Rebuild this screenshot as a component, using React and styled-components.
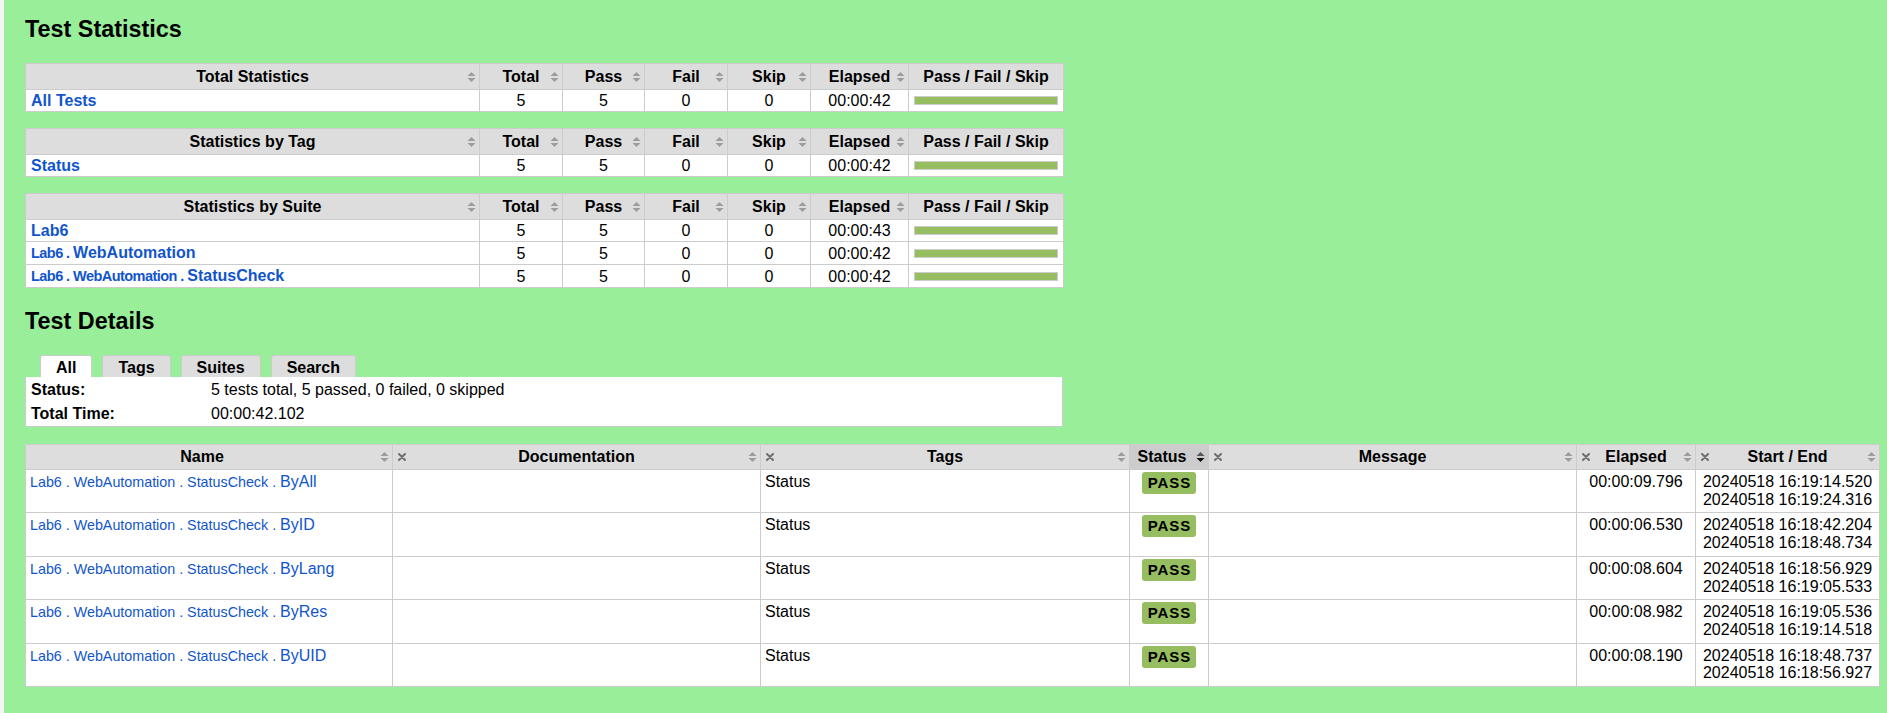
import React from 'react';
import styled, { createGlobalStyle } from 'styled-components';

const GlobalStyle = createGlobalStyle`
    html, body {
        margin: 0;
        padding: 0;
    }
    body {
        background: #9e9;
        color: #000;
        font-family: "Liberation Sans", Arial, Helvetica, sans-serif;
        font-size: 16px;
    }
`;

const Page = styled.div`
    min-height: 100vh;
    box-sizing: border-box;
    border-left: 4px solid #f4f4f4;
    padding: 0 8px 0 21px;
    overflow: hidden;
`;

const Heading = styled.h2`
    margin: ${({ $top }) => $top}px 0 20px;
    font-size: 23.4px;
    line-height: 27px;
    font-weight: bold;
`;

const Link = styled.a`
    color: #15c;
    text-decoration: none;
    font-weight: ${({ $bold }) => ($bold ? 'bold' : 'normal')};
    cursor: pointer;
`;

const ParentName = styled.span`
    font-size: ${({ $size }) => $size}px;
    letter-spacing: ${({ $spacing }) => $spacing || 0}px;
`;

/* ---------- sort / close marks ---------- */

const SortMark = styled.svg`
    position: absolute;
    right: 3px;
    top: 50%;
    margin-top: -6px;
    width: 9px;
    height: 12px;
`;

function SortIcon({ up = '#9c9c9c', down = '#9c9c9c' }) {
    return (
        <SortMark viewBox="0 0 9 12">
            <polygon points="0.5,5 4.5,1 8.5,5" fill={up} />
            <polygon points="0.5,7 4.5,11 8.5,7" fill={down} />
        </SortMark>
    );
}

const CloseMark = styled.svg`
    position: absolute;
    left: 5px;
    top: 50%;
    margin-top: -4px;
    width: 8px;
    height: 8px;
`;

function CloseIcon() {
    return (
        <CloseMark viewBox="0 0 8 8">
            <path d="M1 1 L7 7 M7 1 L1 7" stroke="#707070" strokeWidth="2" strokeLinecap="round" />
        </CloseMark>
    );
}

/* ---------- statistics tables ---------- */

const StatTable = styled.table`
    width: 1038px;
    table-layout: fixed;
    border-collapse: collapse;
    margin-bottom: 16px;
    background: #fff;
`;

const Col = styled.col`
    width: ${({ $w }) => $w}px;
`;

const StatHead = styled.th`
    position: relative;
    background: #ddd;
    border: 1px solid #ccc;
    padding: 3px 5px;
    line-height: 19px;
    font-weight: bold;
    text-align: center;
    white-space: nowrap;
`;

const StatCell = styled.td`
    border: 1px solid #ccc;
    padding: 1px 5px;
    line-height: 19px;
    text-align: ${({ $align }) => $align || 'center'};
    vertical-align: middle;
    white-space: nowrap;
`;

const Graph = styled.div`
    border: 1px solid #ccc;
    height: 7px;
    background: #f2f2f2;
`;

const PassBar = styled.div`
    height: 100%;
    background: #97bd61;
`;

const statCols = [454, 83, 82, 83, 83, 98, 155];

function StatsTable({ title, rows }) {
    return (
        <StatTable>
            <colgroup>
                {statCols.map((w, i) => <Col key={i} $w={w} />)}
            </colgroup>
            <thead>
                <tr>
                    <StatHead>{title}<SortIcon /></StatHead>
                    <StatHead>Total<SortIcon /></StatHead>
                    <StatHead>Pass<SortIcon /></StatHead>
                    <StatHead>Fail<SortIcon /></StatHead>
                    <StatHead>Skip<SortIcon /></StatHead>
                    <StatHead>Elapsed<SortIcon /></StatHead>
                    <StatHead>Pass / Fail / Skip</StatHead>
                </tr>
            </thead>
            <tbody>
                {rows.map((r) => (
                    <tr key={r.parent + r.name}>
                        <StatCell $align="left">
                            <Link $bold>
                                {r.parent && (
                                    <ParentName $size={14.5} $spacing={-0.55}>{r.parent}</ParentName>
                                )}
                                {r.name}
                            </Link>
                        </StatCell>
                        <StatCell>{r.total}</StatCell>
                        <StatCell>{r.pass}</StatCell>
                        <StatCell>{r.fail}</StatCell>
                        <StatCell>{r.skip}</StatCell>
                        <StatCell>{r.elapsed}</StatCell>
                        <StatCell $align="left">
                            <Graph>
                                <PassBar style={{ width: `${(r.pass / r.total) * 100}%` }} />
                            </Graph>
                        </StatCell>
                    </tr>
                ))}
            </tbody>
        </StatTable>
    );
}

const base = { total: 5, pass: 5, fail: 0, skip: 0 };

const totalRows = [{ ...base, parent: '', name: 'All Tests', elapsed: '00:00:42' }];
const tagRows = [{ ...base, parent: '', name: 'Status', elapsed: '00:00:42' }];
const suiteRows = [
    { ...base, parent: '', name: 'Lab6', elapsed: '00:00:43' },
    { ...base, parent: 'Lab6 . ', name: 'WebAutomation', elapsed: '00:00:42' },
    { ...base, parent: 'Lab6 . WebAutomation . ', name: 'StatusCheck', elapsed: '00:00:42' },
];

/* ---------- details ---------- */

const Tabs = styled.div`
    display: flex;
    align-items: flex-end;
    gap: 10px;
    padding-left: 15px;
`;

const Tab = styled.div`
    padding: 2px 15px 0;
    line-height: 19px;
    border: 1px solid #ccc;
    border-bottom: none;
    border-radius: 3px 3px 0 0;
    background: ${({ $active }) => ($active ? '#fff' : '#ddd')};
    font-weight: bold;
    cursor: pointer;
`;

const Summary = styled.div`
    width: 1038px;
    box-sizing: border-box;
    display: grid;
    grid-template-columns: 180px 1fr;
    row-gap: 5px;
    padding: 3px 5px;
    background: #fff;
    border: 1px solid #ccc;
    border-top: none;
    line-height: 19px;
    margin-bottom: 17px;
`;

const SummaryLabel = styled.div`
    font-weight: bold;
`;

const DetailTable = styled.table`
    width: 100%;
    table-layout: fixed;
    border-collapse: collapse;
    background: #fff;
`;

const DetailHead = styled.th`
    position: relative;
    background: ${({ $sorted }) => ($sorted ? '#ccc' : '#ddd')};
    border: 1px solid #ccc;
    padding: 3px 18px 3px ${({ $closable }) => ($closable ? 18 : 4)}px;
    line-height: 18px;
    font-weight: bold;
    text-align: center;
    white-space: nowrap;
`;

const DetailCell = styled.td`
    border: 1px solid #ccc;
    padding: 3px 4px 4px;
    line-height: 17.7px;
    vertical-align: top;
    text-align: ${({ $align }) => $align || 'left'};
    white-space: nowrap;
`;

const Label = styled.span`
    display: inline-block;
    vertical-align: top;
    margin-top: -1px;
    padding: 2px 5px 2px 6px;
    line-height: 18px;
    font-size: 15px;
    font-weight: bold;
    letter-spacing: 1px;
    color: #000;
    background: #97bd61;
    border-radius: 3px;
`;

const detailCols = [367, 368, 369, 79, 368, 119, 184];

const tests = [
    { name: 'ByAll', elapsed: '00:00:09.796', start: '20240518 16:19:14.520', end: '20240518 16:19:24.316' },
    { name: 'ByID', elapsed: '00:00:06.530', start: '20240518 16:18:42.204', end: '20240518 16:18:48.734' },
    { name: 'ByLang', elapsed: '00:00:08.604', start: '20240518 16:18:56.929', end: '20240518 16:19:05.533' },
    { name: 'ByRes', elapsed: '00:00:08.982', start: '20240518 16:19:05.536', end: '20240518 16:19:14.518' },
    { name: 'ByUID', elapsed: '00:00:08.190', start: '20240518 16:18:48.737', end: '20240518 16:18:56.927' },
];

function TestDetails() {
    return (
        <>
            <Tabs>
                <Tab $active>All</Tab>
                <Tab>Tags</Tab>
                <Tab>Suites</Tab>
                <Tab>Search</Tab>
            </Tabs>
            <Summary>
                <SummaryLabel>Status:</SummaryLabel>
                <div>5 tests total, 5 passed, 0 failed, 0 skipped</div>
                <SummaryLabel>Total Time:</SummaryLabel>
                <div>00:00:42.102</div>
            </Summary>
            <DetailTable>
                <colgroup>
                    {detailCols.map((w, i) => <Col key={i} $w={w} />)}
                </colgroup>
                <thead>
                    <tr>
                        <DetailHead>Name<SortIcon /></DetailHead>
                        <DetailHead $closable><CloseIcon />Documentation<SortIcon /></DetailHead>
                        <DetailHead $closable><CloseIcon />Tags<SortIcon /></DetailHead>
                        <DetailHead $sorted>Status<SortIcon up="#555" down="#111" /></DetailHead>
                        <DetailHead $closable><CloseIcon />Message<SortIcon /></DetailHead>
                        <DetailHead $closable><CloseIcon />Elapsed<SortIcon /></DetailHead>
                        <DetailHead $closable><CloseIcon />Start / End<SortIcon /></DetailHead>
                    </tr>
                </thead>
                <tbody>
                    {tests.map((t) => (
                        <tr key={t.name}>
                            <DetailCell>
                                <Link>
                                    <ParentName $size={14.3}>Lab6 . WebAutomation . StatusCheck . </ParentName>
                                    {t.name}
                                </Link>
                            </DetailCell>
                            <DetailCell />
                            <DetailCell>Status</DetailCell>
                            <DetailCell $align="center"><Label>PASS</Label></DetailCell>
                            <DetailCell />
                            <DetailCell $align="center">{t.elapsed}</DetailCell>
                            <DetailCell $align="center">{t.start}<br />{t.end}</DetailCell>
                        </tr>
                    ))}
                </tbody>
            </DetailTable>
        </>
    );
}

export default function App() {
    return (
        <>
            <GlobalStyle />
            <Page>
                <Heading $top={16}>Test Statistics</Heading>
                <StatsTable title="Total Statistics" rows={totalRows} />
                <StatsTable title="Statistics by Tag" rows={tagRows} />
                <StatsTable title="Statistics by Suite" rows={suiteRows} />
                <Heading $top={20}>Test Details</Heading>
                <TestDetails />
            </Page>
        </>
    );
}
